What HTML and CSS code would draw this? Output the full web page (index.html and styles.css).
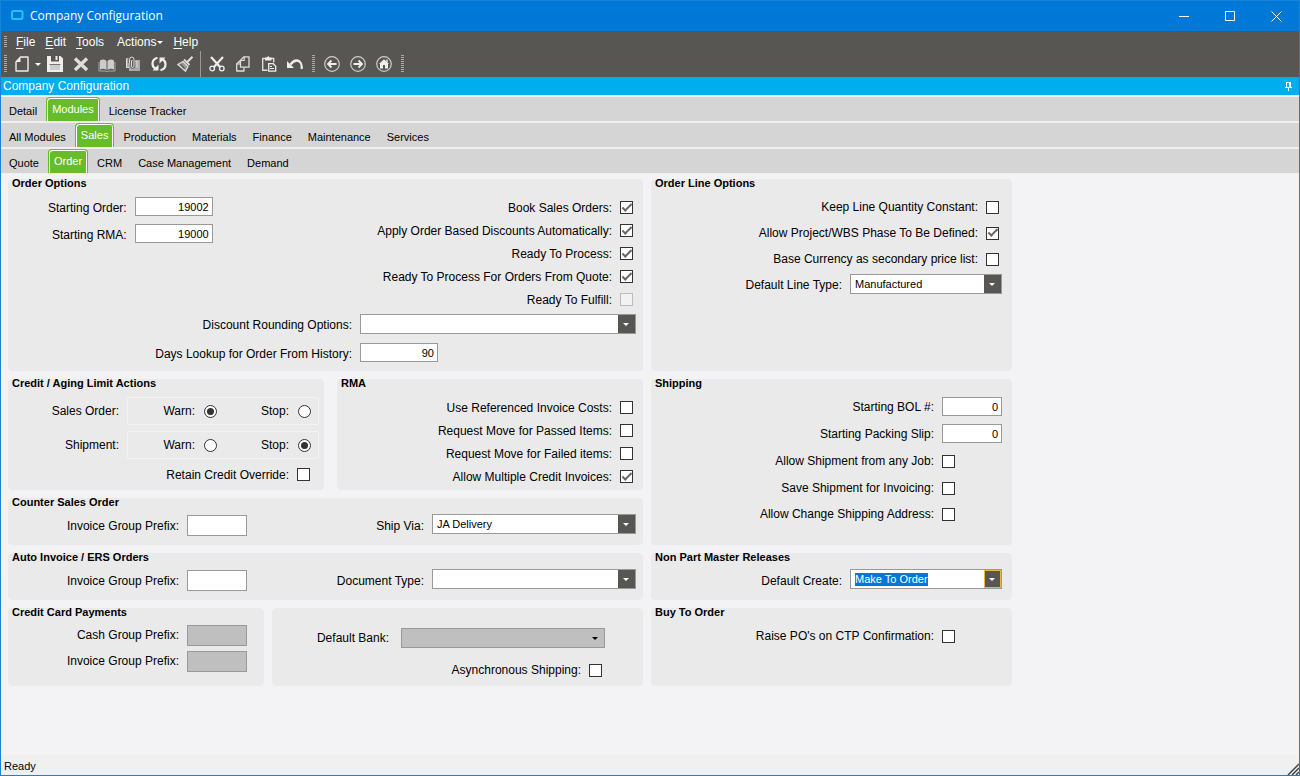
FILE: index.html
```
<!DOCTYPE html>
<html lang="en">
<head>
    <meta charset="UTF-8">
    <meta name="viewport" content="width=device-width, initial-scale=1.0">
    <title>Company Configuration</title>
    <link rel="stylesheet" href="styles.css">
</head>
<body>
    <div class="window">
        <!-- Title bar -->
        <header class="title-bar">
            <svg class="app-icon" width="14" height="12" viewBox="0 0 14 12"><rect x="2" y="2" width="10.500" height="8" rx="1.500" fill="none" stroke="#1fc4f4" stroke-width="2"/></svg>
            <h1>Company Configuration</h1>
            <div class="window-buttons">
                <button type="button" aria-label="Minimize"><svg width="11" height="11" viewBox="0 0 11 11"><path d="M0 5.5h10"/></svg></button>
                <button type="button" aria-label="Maximize"><svg width="11" height="11" viewBox="0 0 11 11"><path d="M.5 .5h9v9h-9z"/></svg></button>
                <button type="button" aria-label="Close"><svg width="11" height="11" viewBox="0 0 11 11"><path d="M.5 .5l10 10M10.5 .5l-10 10"/></svg></button>
            </div>
        </header>

        <!-- Menu and toolbar -->
        <div class="command-area">
            <nav class="menu-bar">
                <span class="grip"></span>
                <a href="#"><u>F</u>ile</a>
                <a href="#"><u>E</u>dit</a>
                <a href="#"><u>T</u>ools</a>
                <a href="#" class="has-arrow">Actions</a>
                <a href="#"><u>H</u>elp</a>
            </nav>
            <div class="toolbar">
                <span class="grip"></span>
                <button type="button" class="tool tool-new" aria-label="New">
                    <svg width="16" height="16" viewBox="0 0 16 16"><path d="M6.5 1h7.500v14H2V6z" fill="none" stroke="#eee" stroke-width="1.4" stroke-linejoin="round"/><path d="M6.5 1v5H2" fill="#eee"/></svg>
                </button>
                <button type="button" class="tool-arrow" aria-label="New options"></button>
                <button type="button" class="tool" aria-label="Save">
                    <svg width="16" height="16" viewBox="0 0 16 16"><path d="M0 0h4v5.500h8V0h1.500L16 2.500V16H0z" fill="#eee"/><path d="M8.500 0h2v4h-2z" fill="#eee"/><path d="M2.500 8.500h11" stroke="#777"/><path d="M3 9h10v5H3z" fill="#ccc"/></svg>
                </button>
                <button type="button" class="tool" aria-label="Delete">
                    <svg width="16" height="16" viewBox="0 0 16 16"><path d="M2 2.500l12 11.500M14 2.500L2 14" stroke="#ddd" stroke-width="3.400"/></svg>
                </button>
                <button type="button" class="tool" aria-label="Memo">
                    <svg width="18" height="16" viewBox="0 0 18 16"><path d="M2 4.500Q5.500 2.500 8.500 5v9Q5.500 12 2 13.500zM16 4.500Q12.500 2.500 9.500 5v9q3-2 6.500-.5z" fill="#ccc"/><path d="M1 6v9h6.500l1.500.8 1.500-.8H17V6" fill="none" stroke="#aaa"/></svg>
                </button>
                <button type="button" class="tool" aria-label="Attachments">
                    <svg width="16" height="16" viewBox="0 0 16 16"><path d="M1 2h5v2h9v11H4V12H1z" fill="#aaa"/><path d="M1.500 2.500v9H4M9 5.500h3v6" fill="none" stroke="#ddd"/><path d="M4.500 7V3.500q0-2.500 2.200-2.500T9 3.500V10q0 1.500-1.300 1.500T6.500 10V5" fill="none" stroke="#575653" stroke-width="2.400"/><path d="M4.500 7V3.500q0-2.500 2.200-2.500T9 3.500V10q0 1.500-1.300 1.500T6.500 10V5" fill="none" stroke="#ddd"/></svg>
                </button>
                <button type="button" class="tool" aria-label="Refresh">
                    <svg width="16" height="16" viewBox="0 0 16 16"><path d="M6.500 1.800Q1.500 3 1.500 7.800q0 3.200 3 5M9.500 14.200q5-1.200 5-6 0-3.200-3-5" fill="none" stroke="#eee" stroke-width="2.200"/><path d="M1.500 14.500h6v-6zM14.500 1.500h-6v6z" fill="#eee"/></svg>
                </button>
                <button type="button" class="tool" aria-label="Clear">
                    <svg width="16" height="16" viewBox="0 0 16 16"><path d="M15.500 .8L10.500 5.800" stroke="#ddd" stroke-width="2.200"/><path d="M7 3.500l5.500 5.500" stroke="#ddd" stroke-width="1.800"/><path d="M6 5.500l5 5L8.500 15.300.8 8.500z" fill="#999" stroke="#ddd" stroke-width="1.200"/><path d="M3.500 8l4 4.500" stroke="#575653" stroke-width="1.200"/></svg>
                </button>
                <span class="separator"></span>
                <button type="button" class="tool" aria-label="Cut">
                    <svg width="16" height="16" viewBox="0 0 16 16"><path d="M2 1l9.500 10.500M14 1L4.500 11.500" stroke="#eee" stroke-width="2.200"/><circle cx="3.200" cy="12.500" r="2.300" fill="none" stroke="#eee" stroke-width="1.300"/><circle cx="12.800" cy="12.500" r="2.300" fill="none" stroke="#eee" stroke-width="1.300"/></svg>
                </button>
                <button type="button" class="tool" aria-label="Copy">
                    <svg width="16" height="16" viewBox="0 0 16 16"><path d="M5 4.700L1.700 8v7H9v-3.500" fill="none" stroke="#ddd" stroke-width="1.300" stroke-linejoin="round"/><path d="M1.700 8H5V4.500" fill="none" stroke="#ddd"/><path d="M9 .8h5v10.400H5.500V4.300z" fill="#575653" stroke="#ddd" stroke-width="1.300" stroke-linejoin="round"/><path d="M9.200 .8v3.700H5.500" fill="none" stroke="#ddd" stroke-width="1.200"/></svg>
                </button>
                <button type="button" class="tool" aria-label="Paste">
                    <svg width="16" height="16" viewBox="0 0 16 16"><path d="M6.500 14.300H1.700V2.500h11v4" fill="none" stroke="#ddd" stroke-width="1.400"/><path d="M4 1.500h2Q7.200-.8 8.500 1.500h2v3H4z" fill="#eee"/><path d="M7.700 7.700h4.500l2.500 2.500v5h-7z" fill="#575653" stroke="#eee" stroke-width="1.300"/><path d="M9 10.500h2M9 12.500h4" stroke="#eee"/></svg>
                </button>
                <button type="button" class="tool" aria-label="Undo">
                    <svg width="16" height="16" viewBox="0 0 16 16"><path d="M3.500 8.500Q8 2.500 12.500 5.500 15.500 8 14.500 13" fill="none" stroke="#eee" stroke-width="2.200"/><path d="M0 5v7h7z" fill="#eee"/></svg>
                </button>
                <span class="grip"></span>
                <button type="button" class="tool" aria-label="Back">
                    <svg width="16" height="16" viewBox="0 0 16 16"><circle cx="8" cy="8" r="7.300" fill="none" stroke="#ccc" stroke-width="1.200"/><path d="M12.500 8H4.500M7.500 4.500L4 8l3.500 3.500" fill="none" stroke="#eee" stroke-width="1.800"/></svg>
                </button>
                <button type="button" class="tool" aria-label="Forward">
                    <svg width="16" height="16" viewBox="0 0 16 16"><circle cx="8" cy="8" r="7.300" fill="none" stroke="#ccc" stroke-width="1.200"/><path d="M3.500 8h8M8.500 4.500L12 8l-3.500 3.500" fill="none" stroke="#eee" stroke-width="1.800"/></svg>
                </button>
                <button type="button" class="tool" aria-label="Home">
                    <svg width="16" height="16" viewBox="0 0 16 16"><circle cx="8" cy="8" r="7.300" fill="none" stroke="#ccc" stroke-width="1.200"/><path d="M3 8l5-4.800L13 8h-1v4.500H9V9H7v3.500H4V8z" fill="#eee"/><path d="M11 3.500v3" stroke="#eee" stroke-width="1.400"/></svg>
                </button>
                <span class="grip"></span>
            </div>
        </div>

        <div class="panel-header">
            <h2>Company Configuration</h2>
            <button type="button" aria-label="Pin"><svg width="7" height="9" viewBox="0 0 7 9"><path d="M1 .5h5M1.500 0v5.500M0 5.500h7M3.500 5.500V9" stroke="#fff" fill="none"/><path d="M4 0h2v5.500H4z" fill="#fff"/></svg></button>
        </div>

        <!-- Tab strips -->
        <nav class="tabs">
            <a href="#">Detail</a>
            <a href="#" class="active">Modules</a>
            <a href="#">License Tracker</a>
        </nav>
        <nav class="tabs">
            <a href="#">All Modules</a>
            <a href="#" class="active">Sales</a>
            <a href="#">Production</a>
            <a href="#">Materials</a>
            <a href="#">Finance</a>
            <a href="#">Maintenance</a>
            <a href="#">Services</a>
        </nav>
        <nav class="tabs">
            <a href="#">Quote</a>
            <a href="#" class="active">Order</a>
            <a href="#">CRM</a>
            <a href="#">Case Management</a>
            <a href="#">Demand</a>
        </nav>

        <main>
            <form class="config">
                <div class="column">
                    <section class="group order-options">
                        <h3>Order Options</h3>
                        <div class="order-top">
                            <div class="stack">
                                <div class="field"><label for="startOrder">Starting Order:</label><input type="text" class="number" id="startOrder" value="19002"></div>
                                <div class="field"><label for="startRma">Starting RMA:</label><input type="text" class="number" id="startRma" value="19000"></div>
                            </div>
                            <div class="stack">
                                <div class="field check"><label for="bookOrders">Book Sales Orders:</label><input type="checkbox" id="bookOrders" checked></div>
                                <div class="field check"><label for="applyDisc">Apply Order Based Discounts Automatically:</label><input type="checkbox" id="applyDisc" checked></div>
                                <div class="field check"><label for="readyProcess">Ready To Process:</label><input type="checkbox" id="readyProcess" checked></div>
                                <div class="field check"><label for="readyQuote">Ready To Process For Orders From Quote:</label><input type="checkbox" id="readyQuote" checked></div>
                                <div class="field check"><label for="readyFulfill">Ready To Fulfill:</label><input type="checkbox" id="readyFulfill" disabled></div>
                            </div>
                        </div>
                        <div class="order-bottom">
                            <label for="rounding">Discount Rounding Options:</label>
                            <div class="combo"><select id="rounding"><option></option></select></div>
                            <label for="daysLookup">Days Lookup for Order From History:</label>
                            <input type="text" class="number" id="daysLookup" value="90">
                        </div>
                    </section>

                    <div class="pair credit-rma">
                        <section class="group credit">
                            <h3>Credit / Aging Limit Actions</h3>
                            <div class="field" role="radiogroup" aria-labelledby="soTitle">
                                <span class="radio-title" id="soTitle">Sales Order:</span>
                                <div class="radio-box">
                                    <label for="soWarn">Warn:</label><input type="radio" name="so" id="soWarn" checked>
                                    <label for="soStop">Stop:</label><input type="radio" name="so" id="soStop">
                                </div>
                            </div>
                            <div class="field" role="radiogroup" aria-labelledby="shTitle">
                                <span class="radio-title" id="shTitle">Shipment:</span>
                                <div class="radio-box">
                                    <label for="shWarn">Warn:</label><input type="radio" name="sh" id="shWarn">
                                    <label for="shStop">Stop:</label><input type="radio" name="sh" id="shStop" checked>
                                </div>
                            </div>
                            <div class="field check"><label for="retain">Retain Credit Override:</label><input type="checkbox" id="retain"></div>
                        </section>

                        <section class="group rma">
                            <h3>RMA</h3>
                            <div class="stack">
                                <div class="field check"><label for="useRef">Use Referenced Invoice Costs:</label><input type="checkbox" id="useRef"></div>
                                <div class="field check"><label for="passed">Request Move for Passed Items:</label><input type="checkbox" id="passed"></div>
                                <div class="field check"><label for="failed">Request Move for Failed items:</label><input type="checkbox" id="failed"></div>
                                <div class="field check"><label for="multiCredit">Allow Multiple Credit Invoices:</label><input type="checkbox" id="multiCredit" checked></div>
                            </div>
                        </section>
                    </div>

                    <section class="group">
                        <h3>Counter Sales Order</h3>
                        <div class="split">
                            <div class="field"><label for="counterPrefix">Invoice Group Prefix:</label><input type="text" class="prefix" id="counterPrefix"></div>
                            <div class="field"><label for="shipVia">Ship Via:</label><div class="combo combo-medium"><select id="shipVia"><option>JA Delivery</option></select></div></div>
                        </div>
                    </section>

                    <section class="group">
                        <h3>Auto Invoice / ERS Orders</h3>
                        <div class="split">
                            <div class="field"><label for="autoPrefix">Invoice Group Prefix:</label><input type="text" class="prefix" id="autoPrefix"></div>
                            <div class="field"><label for="docType">Document Type:</label><div class="combo combo-medium"><select id="docType"><option></option></select></div></div>
                        </div>
                    </section>

                    <div class="pair cards">
                        <section class="group card-payments">
                            <h3>Credit Card Payments</h3>
                            <div class="stack">
                                <div class="field"><label for="cashPrefix">Cash Group Prefix:</label><input type="text" class="prefix" id="cashPrefix" disabled></div>
                                <div class="field"><label for="cardPrefix">Invoice Group Prefix:</label><input type="text" class="prefix" id="cardPrefix" disabled></div>
                            </div>
                        </section>
                        <section class="group bank">
                            <div class="stack">
                                <div class="field wide-gap"><label for="bank">Default Bank:</label><div class="combo combo-medium combo-disabled"><select id="bank" disabled><option></option></select></div></div>
                                <div class="field check"><label for="async">Asynchronous Shipping:</label><input type="checkbox" id="async"></div>
                            </div>
                        </section>
                    </div>
                </div>

                <div class="column">
                    <section class="group order-line">
                        <h3>Order Line Options</h3>
                        <div class="stack">
                            <div class="field check"><label for="keepQty">Keep Line Quantity Constant:</label><input type="checkbox" id="keepQty"></div>
                            <div class="field check"><label for="wbs">Allow Project/WBS Phase To Be Defined:</label><input type="checkbox" id="wbs" checked></div>
                            <div class="field check"><label for="baseCur">Base Currency as secondary price list:</label><input type="checkbox" id="baseCur"></div>
                            <div class="field"><label for="lineType">Default Line Type:</label><div class="combo combo-small"><select id="lineType"><option>Manufactured</option></select></div></div>
                        </div>
                    </section>

                    <section class="group shipping">
                        <h3>Shipping</h3>
                        <div class="form-grid">
                            <label for="bol">Starting BOL #:</label><input type="text" class="number" id="bol" value="0">
                            <label for="packSlip">Starting Packing Slip:</label><input type="text" class="number" id="packSlip" value="0">
                            <label for="anyJob">Allow Shipment from any Job:</label><input type="checkbox" id="anyJob">
                            <label for="saveShip">Save Shipment for Invoicing:</label><input type="checkbox" id="saveShip">
                            <label for="changeAddr">Allow Change Shipping Address:</label><input type="checkbox" id="changeAddr">
                        </div>
                    </section>

                    <section class="group releases">
                        <h3>Non Part Master Releases</h3>
                        <div class="field"><label for="defCreate">Default Create:</label><div class="combo combo-small combo-focus"><select id="defCreate"><option>Make To Order</option></select></div></div>
                    </section>

                    <section class="group buy">
                        <h3>Buy To Order</h3>
                        <div class="form-grid">
                            <label for="raisePo">Raise PO's on CTP Confirmation:</label><input type="checkbox" id="raisePo">
                        </div>
                    </section>
                </div>
            </form>
        </main>

        <footer class="status-bar">
            <span>Ready</span>
            <svg class="resize" width="12" height="12" viewBox="0 0 12 12"><path d="M1 12L12 1M5 12l7-7M9 12l3-3" stroke="#444" stroke-width="1.500"/></svg>
        </footer>
    </div>
</body>
</html>
```
FILE: styles.css
```
*,
*::before,
*::after {
    margin: 0;
    padding: 0;
    box-sizing: border-box;
}

body {
    font-family: "Liberation Sans", Arial, sans-serif;
    font-size: 12px;
    line-height: 14px;
    color: #000;
    background: #f3f3f5;
}

a {
    color: inherit;
    text-decoration: none;
}

button {
    border: none;
    background: none;
    color: inherit;
}

svg {
    display: block;
}

.window {
    display: flex;
    flex-direction: column;
    min-height: 100vh;
    border: 1px solid #1883d7;
}

/* Title bar */
.title-bar {
    display: flex;
    align-items: center;
    height: 30px;
    padding-left: 9px;
    background: #0078d7;
    color: #fff;
}

.app-icon {
    margin-bottom: 2px;
}

.title-bar h1 {
    flex: 1;
    margin-left: 6px;
    font-family: "Open Sans", "Noto Sans", sans-serif;
    font-size: 12px;
    font-weight: 400;
}

.window-buttons {
    display: flex;
}

.window-buttons button {
    display: flex;
    align-items: center;
    justify-content: center;
    width: 46px;
    height: 30px;
}

.window-buttons svg {
    fill: none;
    stroke: #fff;
}

/* Menu and toolbar */
.command-area {
    height: 46px;
    padding-left: 3px;
    background: #575653;
    color: #fff;
}

.menu-bar,
.toolbar {
    display: flex;
    align-items: center;
}

.menu-bar {
    height: 20px;
    padding-top: 2px;
    gap: 10px;
}

.menu-bar .grip {
    height: 12px;
    margin-right: -1px;
}

.menu-bar a {
    text-underline-offset: 2px;
}

.menu-bar .has-arrow {
    display: flex;
    align-items: center;
    gap: 1px;
    margin-left: 3px;
}

.has-arrow::after,
.tool-arrow::after {
    content: "";
    border: 3px solid transparent;
    border-top-color: #fff;
    border-bottom: none;
}

.toolbar {
    height: 26px;
}

.grip {
    width: 3px;
    height: 18px;
    background: repeating-linear-gradient(#aaa 0 1px, #575653 1px 2px);
}

.toolbar .tool ~ .grip {
    margin: 0 4px;
}

.tool {
    display: flex;
    align-items: center;
    justify-content: center;
    width: 26px;
    height: 26px;
}

.tool-new {
    margin-left: 2px;
}

.tool-arrow {
    display: flex;
    width: 7px;
}

.separator {
    align-self: stretch;
    width: 1px;
    margin: 0 3px 0 2px;
    background: #999;
}

.panel-header {
    display: flex;
    align-items: center;
    justify-content: space-between;
    height: 18px;
    padding: 0 7px 0 2px;
    background: #00adef;
    color: #fff;
}

.panel-header h2 {
    font-size: 12px;
    font-weight: 400;
}

/* Tab strips */
.tabs {
    display: flex;
    height: 26px;
    border-top: 2px solid #f0f0f0;
    background: #d5d5d5;
    font-size: 11px;
}

.tabs a {
    padding: 7px 8px 0;
}

.tabs .active {
    margin: 0 1px;
    padding: 4px 5px 0;
    border: 1px solid #66bc29;
    border-bottom: none;
    border-radius: 4px 4px 0 0;
    background: #66bc29;
    box-shadow: inset 1px 1px #fff, inset -1px 0 #fff;
    color: #fff;
}

/* Form groups */
main {
    flex: 1;
    padding: 5px 7px;
    border-top: 1px solid #f0f0f0;
}

.config {
    display: grid;
    grid-template-columns: minmax(0, 635px) minmax(0, 361px);
    gap: 8px;
}

.column {
    display: flex;
    flex-direction: column;
    gap: 8px;
}

.pair {
    display: grid;
}

.credit-rma {
    grid-template-columns: 316fr 306fr;
    gap: 13px;
}

.cards {
    grid-template-columns: 256fr 371fr;
    gap: 8px;
}

.group {
    border-radius: 4px;
    background: #eaeaea;
}

.group h3 {
    padding-left: 4px;
    font-size: 11px;
    line-height: 8px;
}

.stack {
    display: grid;
}

.field {
    display: flex;
    align-items: center;
    justify-content: flex-end;
    gap: 8px;
}

.wide-gap {
    gap: 12px;
}

.check {
    margin-right: 3px;
}

/* Labels sit slightly lower than their text boxes */
.order-top .stack:first-child label,
.order-bottom label,
.order-line .field:last-child label {
    padding-top: 2px;
}

/* Controls */
input[type="text"],
select {
    height: 20px;
    border: 1px solid #999;
    border-radius: 0;
    background: #fff;
    color: #000;
    font-family: inherit;
}

input[type="text"] {
    padding: 0 3px;
    font-size: 12px;
}

input.number {
    width: 78px;
    height: 19px;
    font-size: 11px;
    text-align: right;
}

input.prefix {
    width: 60px;
    height: 21px;
}

input[type="text"]:disabled,
select:disabled {
    background: #bfbfbf;
    opacity: 1;
}

input[type="checkbox"],
input[type="radio"] {
    display: grid;
    place-content: center;
    flex: none;
    width: 13px;
    height: 13px;
    border: 1px solid #333;
    background: #fff;
    appearance: none;
}

input[type="checkbox"]:checked::before {
    content: "";
    width: 10px;
    height: 5px;
    margin-top: -3px;
    border: solid #666;
    border-width: 0 0 2px 2px;
    transform: rotate(-45deg);
}

input[type="checkbox"]:disabled {
    border-color: #bbb;
    background: #f2f2f2;
}

input[type="radio"] {
    border-radius: 50%;
}

input[type="radio"]:checked::before {
    content: "";
    width: 7px;
    height: 7px;
    border-radius: 50%;
    background: #333;
}

.combo {
    position: relative;
    height: 20px;
}

.combo select {
    display: block;
    width: 100%;
    padding: 0 20px 0 4px;
    font-size: 11px;
    appearance: none;
}

.combo::before {
    content: "";
    position: absolute;
    top: 1px;
    right: 1px;
    width: 17px;
    height: 18px;
    background: #575653;
    pointer-events: none;
}

.combo::after {
    content: "";
    position: absolute;
    top: 9px;
    right: 7px;
    border: 3px solid transparent;
    border-top-color: #fff;
    border-bottom: none;
    pointer-events: none;
}

.combo-medium {
    width: 204px;
}

.combo-small {
    width: 152px;
}

.combo-disabled::before {
    background: none;
}

.combo-disabled::after {
    border-top-color: #000;
}

.combo-focus select {
    background: linear-gradient(#0078d7, #0078d7) 4px center / 73px 13px no-repeat #fff;
    color: #fff;
}

.combo-focus::before {
    border: 1px solid #e8b93c;
}

/* Order Options */
.order-options {
    padding-bottom: 3px;
}

.order-top {
    display: flex;
    justify-content: space-between;
    align-items: flex-start;
    padding: 9px 7px 0 40px;
}

.order-top .stack:first-child {
    grid-auto-rows: 21px;
    row-gap: 6px;
}

.order-top .stack:last-child,
.rma .stack {
    grid-auto-rows: 23px;
}

.order-bottom {
    display: grid;
    grid-template-columns: 1fr 276px;
    grid-template-rows: 26px 31px;
    align-items: center;
    column-gap: 8px;
    padding-right: 7px;
    text-align: right;
}

/* Credit and RMA */
.credit {
    padding-right: 5px;
}

.credit h3 {
    margin-bottom: 10px;
}

.credit .field + .field {
    margin-top: 6px;
}

.credit .check.field {
    height: 31px;
    margin: 0 9px 0 0;
}

.radio-box {
    display: flex;
    align-items: center;
    justify-content: flex-end;
    gap: 9px;
    width: 192px;
    height: 28px;
    padding-right: 7px;
    border: 1px solid #f3f3f5;
    border-radius: 2px;
}

.radio-box input + label {
    margin-left: 35px;
}

.rma .stack {
    padding: 9px 7px 2px 0;
}

/* Counter Sales Order, Auto Invoice */
.split {
    display: grid;
    grid-template-columns: 239px 1fr;
    align-items: center;
    height: 39px;
    padding-right: 7px;
}

.split .combo,
.releases .combo {
    margin-bottom: 3px;
}

/* Credit Card Payments */
.card-payments .stack {
    grid-auto-rows: 26px;
    padding: 6px 17px 12px 0;
}

.bank .stack {
    grid-auto-rows: 32px;
    padding: 14px 38px 0 0;
}

/* Right column */
.order-line .stack {
    grid-template-rows: repeat(3, 26px) 24px;
    padding: 7px 10px 75px 0;
}

.form-grid {
    display: grid;
    grid-template-columns: 1fr 60px;
    grid-auto-rows: 26px;
    align-items: center;
    column-gap: 8px;
    padding-right: 10px;
    text-align: right;
}

.form-grid .number {
    width: 60px;
}

.shipping .form-grid {
    grid-template-rows: 27px 27px 28px;
    padding-top: 6px;
    padding-bottom: 18px;
}

.releases .field {
    height: 39px;
    padding-right: 10px;
}

.buy .form-grid {
    padding-top: 7px;
    padding-bottom: 37px;
}

/* Status bar */
.status-bar {
    display: flex;
    align-items: center;
    justify-content: space-between;
    height: 20px;
    padding-left: 3px;
    background: #f0f0f0;
    font-size: 11px;
}

.status-bar span {
    padding-top: 2px;
}

.resize {
    align-self: flex-end;
}
```
